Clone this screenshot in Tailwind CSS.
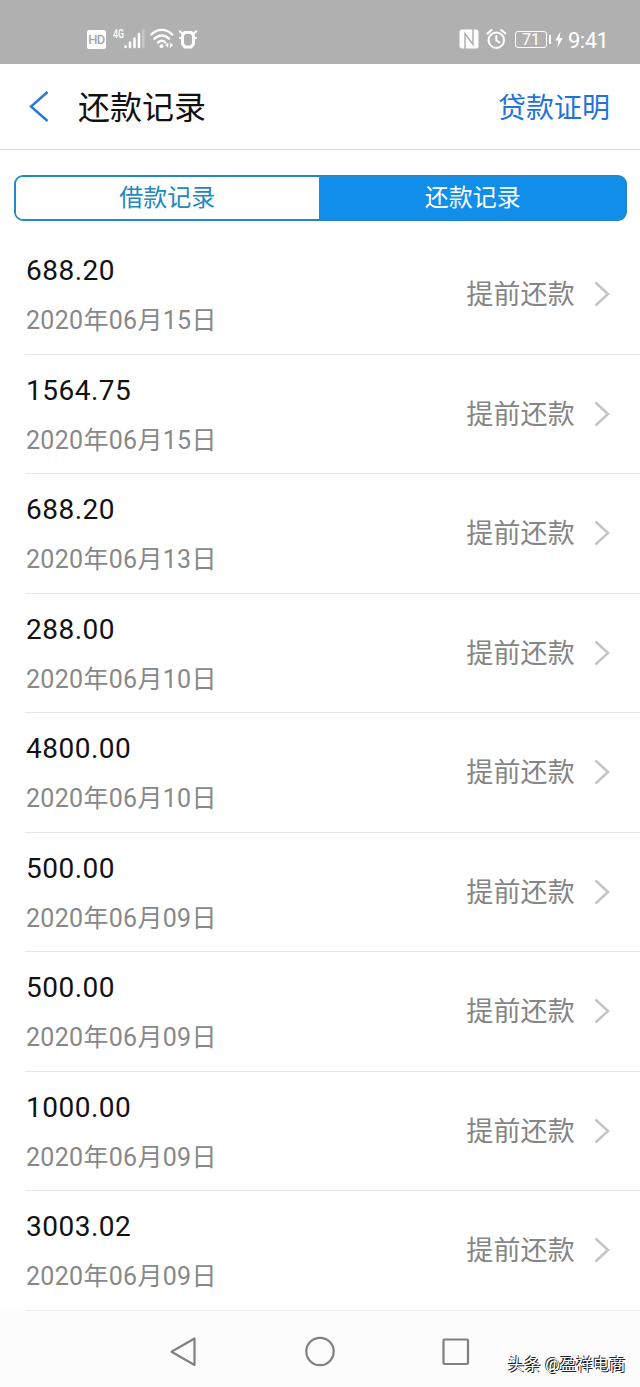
<!DOCTYPE html>
<html lang="zh-CN">
  <head>
    <meta charset="UTF-8" />
    <meta name="viewport" content="width=device-width, initial-scale=1.0" />
    <title>还款记录</title>
    <script src="https://cdn.jsdelivr.net/npm/@tailwindcss/browser@4"></script>
  </head>
  <body class="m-0 p-0 bg-white font-[Roboto,'Noto_Sans_CJK_SC',sans-serif]">
    <div class="relative w-[640px] h-[1387px] overflow-hidden flex flex-col">
      <!-- status bar -->
      <div class="h-16 shrink-0 bg-[#b0b0b0] text-white flex justify-between pt-[26px] pl-[87px] pr-[31px]">
        <div class="flex items-start">
          <div class="mt-1 w-[19px] h-[19px] rounded-[2px] bg-white text-[#a8a8a8] text-[13px] leading-[20px] font-medium text-center tracking-[-0.5px]">HD</div>
          <svg class="ml-[6px] mt-[2px]" width="33" height="24" viewBox="0 0 33 24">
            <text x="1" y="10" font-size="12" font-weight="500" fill="#fff" textLength="11" lengthAdjust="spacingAndGlyphs">4G</text>
            <g stroke="#fff" stroke-width="2.6" stroke-linecap="round">
              <path d="M13.500 18.500v.5M18 14.500v4.500M22.500 10.500v8.500M27 6v13" />
              <path d="M31.300 2.500v16.500" stroke-opacity=".3" />
            </g>
          </svg>
          <svg class="ml-[5px] mt-[2px]" width="24" height="22" viewBox="0 0 24 22" fill="none" stroke="#fff" stroke-width="2.3" stroke-linecap="round">
            <path d="M1.3 6.5C7.5.2 16 .2 22.3 6.5M4.5 10.700c4.3-4.3 10.3-4.3 14.6 0M8 14.6c2.3-2.2 5.1-2.2 7.4 0" />
            <circle cx="11.5" cy="18.200" r="1.900" fill="#fff" stroke="none" />
            <path d="M18.300 14.500v5.600l-3-2.800zM20 14.500v5.600l3-2.800z" fill="#fff" stroke="none" />
          </svg>
          <svg class="ml-[4px] mt-[3px]" width="20" height="21" viewBox="0 0 20 21" fill="none" stroke="#fff">
            <path d="M6.500 3.500h7l2 3v8.500l-2.500 3h-6L4.500 15V6.500z" stroke-width="3" stroke-linejoin="round" />
            <path d="M2 2.500l3.500 3M18 2.500l-3.500 3M2 9h2M16 9h2" stroke-width="2.200" stroke-linecap="round" />
          </svg>
        </div>
        <div class="flex items-start">
          <svg class="mt-[3px]" width="20" height="20" viewBox="0 0 20 20">
            <rect x=".5" y=".5" width="19" height="19" rx="2.500" fill="#fff" />
            <path d="M6 20V4.500l8 11V0" stroke="#b0b0b0" stroke-width="1.500" fill="none" />
          </svg>
          <svg class="ml-[7px] mt-[2px]" width="21" height="22" viewBox="0 0 21 22" fill="none" stroke="#fff" stroke-width="2" stroke-linecap="round">
            <circle cx="10.300" cy="12.200" r="7.700" />
            <path d="M10.300 8v4.500l3 1.800M1.500 5.500l4-3.500M19.300 5.500l-4-3.500" />
          </svg>
          <div class="ml-[8px] mt-[5px] w-[32px] h-[17px] border border-white rounded-[3px] text-[16px] leading-[16px] text-center">71</div>
          <div class="ml-[2px] mt-[9px] w-[2px] h-[9px] bg-white"></div>
          <svg class="ml-[4px] mt-[5px]" width="8" height="17" viewBox="0 0 8 17"><path d="M5.500.500L.3 9.500h3L2.500 16.500 7.700 7H4.500z" fill="#fff" /></svg>
          <div class="ml-[5px] mt-[3px] text-[22px] leading-6 w-[41px] whitespace-nowrap tracking-[-0.5px]">9:41</div>
        </div>
      </div>

      <!-- title bar -->
      <div class="h-[86px] shrink-0 border-b border-[#d9d9d9] flex items-center pl-[29px] pr-[30px]">
        <svg width="20" height="32" viewBox="0 0 20 32" fill="none" stroke="#2678d8" stroke-width="2.400"><path d="M18.500 1L2 15.500 18.500 30" /></svg>
        <h1 class="ml-[29px] mt-[2px] text-[32px] leading-10 text-[#111]">还款记录</h1>
        <a class="ml-auto mt-[5px] text-[28px] leading-10 text-[#2272d8]">贷款证明</a>
      </div>

      <!-- tabs -->
      <div class="mt-[25px] mx-[13.5px] h-[46px] shrink-0 flex border-2 border-[#2487c9] rounded-[9px] bg-linear-to-r from-white from-50% to-[#118eea] to-50% overflow-hidden text-2xl leading-[43px] text-center">
        <div class="w-[303.500px] bg-white text-[#2487bd]">借款记录</div>
        <div class="flex-1 bg-[#118eea] text-white pl-[2px]">还款记录</div>
      </div>

      <div id="list" class="mt-[14px] pl-[25px]"></div>

      <!-- navigation bar -->
      <div class="flex-1 bg-[#fcfcfc] relative flex pt-[24px] pl-[169px]">
        <svg width="302" height="34" viewBox="0 0 302 34" fill="none" stroke="#808080" stroke-width="2.200" stroke-linejoin="round">
          <path d="M25.500 3.500v26.500L2.500 16.800z" />
          <circle cx="151" cy="16.500" r="13.700" />
          <rect x="274.500" y="4.500" width="24.500" height="24.500" rx="1" />
        </svg>
        <div class="absolute left-[508px] top-[42px] text-[16px] leading-6 tracking-[0.4px] whitespace-nowrap text-white [text-shadow:-1px_-1px_0_#222,1px_1px_0_#222]">头条 @盈祥电商</div>
      </div>
    </div>

    <script>
      const records = [
        ["688.20", "2020年06月15日"],
        ["1564.75", "2020年06月15日"],
        ["688.20", "2020年06月13日"],
        ["288.00", "2020年06月10日"],
        ["4800.00", "2020年06月10日"],
        ["500.00", "2020年06月09日"],
        ["500.00", "2020年06月09日"],
        ["1000.00", "2020年06月09日"],
        ["3003.02", "2020年06月09日"],
      ];

      document.getElementById("list").innerHTML = records
        .map(
          ([amount, date]) => `
            <div class="h-[119.5px] border-b border-[#e8e8e8] flex items-center justify-between pr-[30px]">
              <div class="pt-[4px] pl-px">
                <p class="text-[28px] leading-10 tracking-[0.5px] text-[#111]">${amount}</p>
                <p class="mt-[10px] text-[25px] leading-10 tracking-[0.3px] text-[#888]">${date}</p>
              </div>
              <div class="flex items-center">
                <span class="mt-[2px] text-[27px] leading-10 tracking-[0.2px] text-[#858585]">提前还款</span>
                <svg class="ml-[19px]" width="16" height="26" viewBox="0 0 16 26" fill="none" stroke="#c4c4c4" stroke-width="2.500"><path d="M1.500 1.500L14 13 1.500 24.500" /></svg>
              </div>
            </div>`
        )
        .join("");
    </script>
  </body>
</html>
